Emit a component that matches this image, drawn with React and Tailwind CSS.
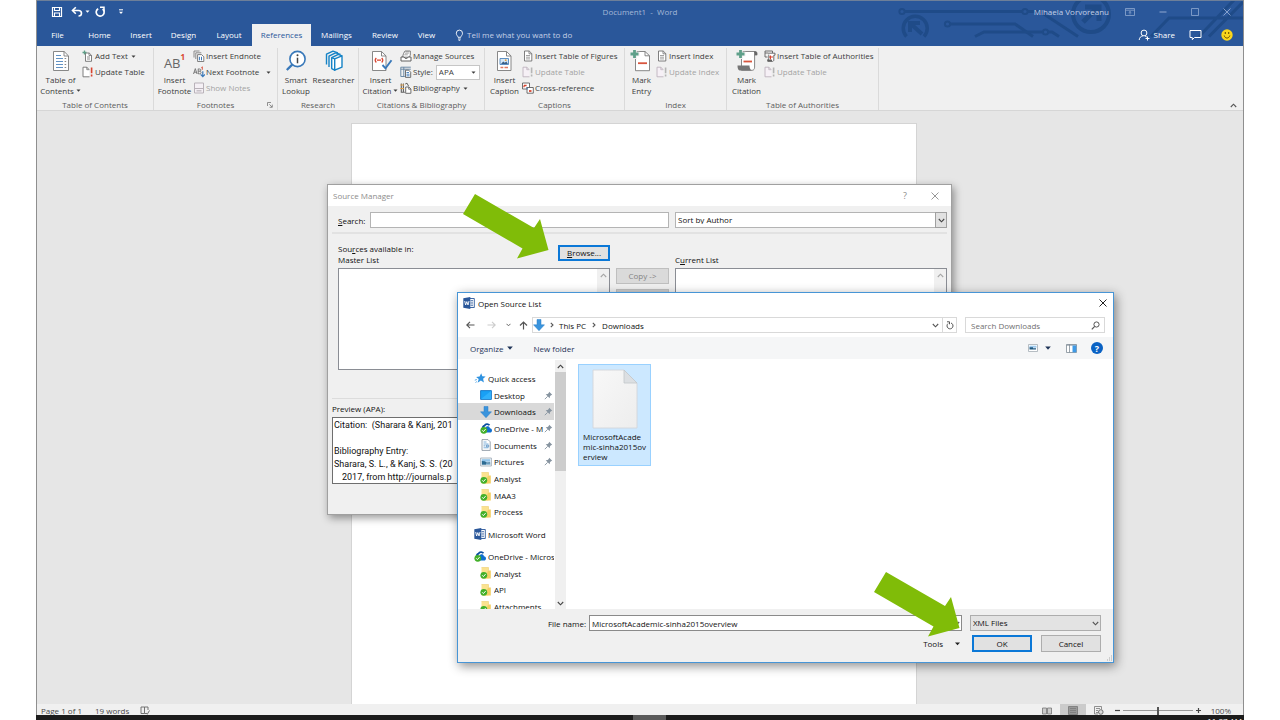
import React from "react";

const Svg = ({ w = 12, h = 12, className = "", children }) => (
  <svg width={w} height={h} viewBox={`0 0 ${w} ${h}`} fill="none" aria-hidden="true" className={`shrink-0 ${className}`}>
    {children}
  </svg>
);

const Caret = ({ className = "" }) => (
  <Svg w={5} h={3} className={className}>
    <path d="M0.5 0.5h4L2.5 2.7z" fill="currentColor" />
  </Svg>
);

const Chevron = ({ up = false, className = "" }) => (
  <Svg w={7} h={5} className={className}>
    <path d={up ? "M0.8 4L3.5 1.2L6.2 4" : "M0.8 1L3.5 3.8L6.2 1"} stroke="currentColor" strokeWidth="1.1" />
  </Svg>
);

/* ---------- ribbon icons ---------- */

const DocLines = ({ faded = false }) => (
  <Svg>
    <path d="M2.5 1h4.7l2.6 2.6V11H2.5z" fill="#fff" stroke={faded ? "#b5b5b5" : "#707070"} strokeWidth="0.9" />
    <path d="M7 1v2.8h2.8" stroke={faded ? "#b5b5b5" : "#707070"} strokeWidth="0.8" />
    <path d="M4 5.5h4M4 7.2h4M4 8.9h4" stroke={faded ? "#c4c4c4" : "#8a8a8a"} strokeWidth="0.8" />
  </Svg>
);

const UpdateIcon = ({ faded = false }) => (
  <Svg>
    <path d="M7 3.5L4.8 1.2H1v9.6h6.5" fill={faded ? "#f6f0f6" : "#fff"} stroke={faded ? "#bdb2bd" : "#707070"} strokeWidth="0.9" />
    <path d="M4.8 1.2v2.5h2.4" stroke={faded ? "#bdb2bd" : "#707070"} strokeWidth="0.8" />
    <path d="M9.6 1.5v5.7M9.6 8.6v2" stroke={faded ? "#b5b5b5" : "#d8432e"} strokeWidth="1.6" />
  </Svg>
);

const AddTextIcon = () => (
  <Svg>
    <path d="M3.5 3h3.7l2.3 2.3v6H3.5z" fill="#fff" stroke="#707070" strokeWidth="0.9" />
    <path d="M7 3v2.5h2.5M5 7h3M5 9h3" stroke="#707070" strokeWidth="0.8" />
    <path d="M2.5 0.5v4M0.5 2.5h4" stroke="#5f9e87" strokeWidth="1.3" />
  </Svg>
);

const EndnoteIcon = () => (
  <Svg>
    <path d="M1 7.5V1h5.5M2.8 9V2.8h5.5" stroke="#808080" strokeWidth="0.9" />
    <path d="M4.6 4.6h4l2.2 2.2V11.5H4.6z" fill="#fff" stroke="#707070" strokeWidth="0.9" />
    <path d="M6.4 6.8v3.5M8.5 6.8v3.5" stroke="#3b78b8" strokeWidth="1" />
  </Svg>
);

const NextFootnoteIcon = () => (
  <Svg>
    <path d="M0.5 8L2.3 2.6L4 8M1 6.2h2.6M5.2 2.8V8M5.2 3h1.5c1.6 0 1.6 2.2 0 2.2H5.2M6.6 5.3c2 0 2 2.5 0 2.5H5.2" stroke="#707070" strokeWidth="0.9" />
    <path d="M9.3 0.8v3M8.4 1.6l0.9-0.8" stroke="#d8432e" strokeWidth="0.9" />
    <path d="M9.8 5.2v5.2M7.6 8.4l2.2 2.3L12 8.4" stroke="#3b78b8" strokeWidth="1.2" />
  </Svg>
);

const NotesIcon = () => (
  <Svg>
    <path d="M1.5 1h9v10h-9z" fill="#f5f0f5" stroke="#b9b2b9" />
    <path d="M1.5 6.5h9" stroke="#b9b2b9" />
    <path d="M3.5 8.8h5" stroke="#c2bcc2" strokeWidth="1.4" />
  </Svg>
);

const ManageIcon = () => (
  <Svg>
    <path d="M3.5 3.5L5 1h5.3v4.2L8.8 7.2H2.5z" fill="#fff" stroke="#707070" strokeWidth="0.9" />
    <path d="M4.8 3.2h4M5.8 1.8h3.3M4.3 4.8h3.5" stroke="#808080" strokeWidth="0.7" />
    <path d="M1 7h3l1 1.3h2.2L8.3 7H11v4H1z" fill="#fff" stroke="#606060" strokeWidth="1" />
  </Svg>
);

const StyleIcon = () => (
  <Svg>
    <path d="M0.8 1.2h10M0.8 3.2h10M0.8 1.2v9.3h4M3.8 1.2v9.3" stroke="#5f7f9e" strokeWidth="0.9" />
    <path d="M5.5 4.2h3.2l2 2v5.2H5.5z" fill="#fff" stroke="#606060" strokeWidth="0.9" />
    <path d="M6.5 6.5h2.5M6.5 8.2h3M6.5 9.8h3" stroke="#3b78b8" strokeWidth="0.9" />
  </Svg>
);

const BiblioIcon = () => (
  <Svg>
    <path d="M1.3 1.5v8.8h3.5M3.4 1.5v8.8" stroke="#606060" strokeWidth="1.1" />
    <path d="M5.2 2l1.8-0.8 1.6 3" stroke="#606060" strokeWidth="1" />
    <path d="M0.3 3h3.8M0.3 6.5h3.8" stroke="#dda04a" strokeWidth="1.1" />
    <path d="M5.7 5h3.2l2 2v4.3H5.7z" fill="#fff" stroke="#606060" strokeWidth="0.9" />
    <path d="M8.7 5v2.2h2.2" stroke="#606060" strokeWidth="0.8" />
  </Svg>
);

const CrossRefIcon = () => (
  <Svg>
    <path d="M0.5 1h7v6h-7z" fill="#fff" stroke="#606060" strokeWidth="0.9" />
    <path d="M5 5.500h6.300v5.700H5z" fill="#fff" stroke="#606060" strokeWidth="0.9" />
    <path d="M2 3.500h2.600M2 3.500v1.800" stroke="#d8432e" strokeWidth="1.300" />
    <path d="M7 9h2.500" stroke="#d8432e" strokeWidth="1.800" />
    <path d="M4 5.500L6 7.300" stroke="#3b78b8" strokeWidth="1" />
  </Svg>
);

const AuthoritiesIcon = () => (
  <Svg>
    <path d="M1 1h7.5v2M1 1v6h2.5M1 3h3" stroke="#606060" strokeWidth="0.9" />
    <path d="M4 3.2h7v2H9.8v4.8c0 1-0.8 1.4-1.6 1.4H3.8V9.6h1V4.5" fill="#fff" stroke="#606060" strokeWidth="0.9" />
    <path d="M5 7h4M6.5 5.5v4" stroke="#d8432e" strokeWidth="1" />
    <path d="M3.5 10.4h4.5" stroke="#606060" strokeWidth="1.6" />
  </Svg>
);

const TocBig = () => (
  <Svg w={24} h={24}>
    <path d="M4.5 2.5h10.6l4.4 4.4v14.6h-15z" fill="#fff" stroke="#7a7a7a" strokeWidth="0.9" />
    <path d="M15 2.5v4.5h4.5" stroke="#7a7a7a" strokeWidth="0.9" />
    <path d="M7 6.5h5M7 9.5h7M7 12.5h7M7 15.5h7M7 18.5h7" stroke="#4f86bd" strokeWidth="0.9" />
    <path d="M15.6 9.5h1.6M15.6 12.5h1.6M15.6 15.5h1.6M15.6 18.5h1.6" stroke="#7a7a7a" strokeWidth="0.9" />
  </Svg>
);

const FootnoteBig = () => (
  <span className="flex h-6 items-center justify-center text-[#666666]">
    <span className="pt-1 text-[13px] leading-none">AB</span>
    <sup className="top-0 self-start pt-1 text-[8px] leading-none font-bold text-[#d8432e]">1</sup>
  </span>
);

const SmartBig = () => (
  <Svg w={24} h={24}>
    <circle cx="13.5" cy="10" r="7.6" fill="#fff" stroke="#3878b9" strokeWidth="1.6" />
    <path d="M8.2 15.6L2.8 21" stroke="#3878b9" strokeWidth="2.3" />
    <path d="M13.5 8.7v5.6" stroke="#444" strokeWidth="1.5" />
    <circle cx="13.5" cy="6.3" r="1" fill="#444" />
  </Svg>
);

const ResearcherBig = () => (
  <Svg w={24} h={24}>
    <g stroke="#1683c6" strokeWidth="1.4" strokeLinejoin="round">
      <path d="M4.5 15.500V5.200L11 2.200l5 1.600" />
      <path d="M7 18V7.200L13.500 3.800l5 1.600" fill="#f0f0f0" />
      <path d="M9.700 8.600l3 1.200v11.400l-3-1.600z" fill="#fff" />
      <path d="M12.700 9.800l7.300-3v11.300l-7.300 3.100z" fill="#fff" />
      <path d="M9.700 8.600l6.600-3.200 3.700 1.400" />
    </g>
  </Svg>
);

const CitationBig = () => (
  <Svg w={24} h={24}>
    <path d="M3.5 2.5h9l4.5 4.4v14.6H3.5z" fill="#fff" stroke="#7a7a7a" strokeWidth="0.9" />
    <path d="M12.5 2.5v4.5H17" stroke="#7a7a7a" strokeWidth="0.9" />
    <path d="M7.300 9c-1.300 1.300-1.300 3.200 0 4.500M12.700 9c1.300 1.300 1.300 3.200 0 4.500M8 11.200h4" stroke="#d8432e" strokeWidth="1.200" />
    <path d="M13.5 16l3 3.3 6-8" stroke="#3878b9" strokeWidth="1.9" />
  </Svg>
);

const CaptionBig = () => (
  <Svg w={24} h={24}>
    <path d="M4.5 2.5h9l4.5 4.4v14.6H4.500z" fill="#fff" stroke="#7a7a7a" strokeWidth="0.9" />
    <path d="M13.500 2.500v4.500H18" stroke="#7a7a7a" strokeWidth="0.9" />
    <path d="M7 9.500h8.500v6H7z" fill="#d6e7f6" stroke="#4f86bd" strokeWidth="0.9" />
    <path d="M8 15l2.200-2.600 1.600 1.400 1.500-1.300 1.700 2.500z" fill="#3a5f86" />
    <circle cx="12.700" cy="11.200" r="0.9" fill="#e6a23c" />
    <path d="M7.500 18.500h2.800M11.500 18.500h3.500" stroke="#e0775f" strokeWidth="1.3" />
  </Svg>
);

const MarkEntryBig = () => (
  <Svg w={24} h={24}>
    <path d="M5.5 4.500V2.500h9.500l4.500 4.200v15h-14z" fill="#fff" stroke="#7a7a7a" strokeWidth="0.9" />
    <path d="M15 2.500v4.300h4.500" stroke="#7a7a7a" strokeWidth="0.9" />
    <path d="M8 14.200h9" stroke="#d8553e" strokeWidth="1.800" />
    <path d="M4.500 0v10M0 5h9.500" stroke="#f0f0f0" strokeWidth="4.400" />
    <path d="M4.500 1v8M0.500 5h8" stroke="#5fa08a" strokeWidth="2.800" />
  </Svg>
);

const MarkCitationBig = () => (
  <Svg w={24} h={24}>
    <path d="M6.5 2.500h14c1 0 1.500 0.800 1.500 3.200h-2.400v12.400c0 1.800-0.800 3.200-2.400 3.200H6.500z" fill="#fff" stroke="#7a7a7a" strokeWidth="0.9" />
    <path d="M19 2.500h1.700c1 0 1.500 1 1.500 3.800h-2.800z" fill="#666" />
    <path d="M2.500 16.500h12c0 2 0.600 3.900 2 4.900H4.700C3.200 21.400 2.500 19.200 2.500 16.500z" fill="#757575" />
    <path d="M8.5 12.500h8.500" stroke="#d8553e" strokeWidth="1.800" />
    <path d="M5.500 0v10M1 5h9.500" stroke="#f0f0f0" strokeWidth="4.400" />
    <path d="M5.500 1v8M1.500 5h8" stroke="#5fa08a" strokeWidth="2.800" />
  </Svg>
);

/* ---------- ribbon parts ---------- */

const Group = ({ width, label, launcher, children }) => (
  <section className={`${width} flex shrink-0 flex-col border-r border-[#dadada]`}>
    <div className="flex h-[50px] shrink-0 items-start pl-0.5">{children}</div>
    <div className="relative pt-px text-center text-[8px] leading-[11px] text-[#5c5c5c]">
      {label}
      {launcher && (
        <button aria-label={`${label} settings`} className="absolute right-1 top-1">
          <Svg w={6} h={6}>
            <path d="M0.5 4V0.5H4M2.3 2.3L5 5M5.3 2.6v2.7H2.6" stroke="#777" strokeWidth="0.8" />
          </Svg>
        </button>
      )}
    </div>
  </section>
);

const Big = ({ width, icon, top, bottom, caret }) => (
  <button className={`${width} flex shrink-0 flex-col items-center text-[8px] leading-[11px] whitespace-nowrap text-[#3c3c3c]`}>
    <span className="flex h-[26px] items-center">{icon}</span>
    <span>{top}</span>
    <span className="flex items-center gap-0.5">
      {bottom}
      {caret && <Caret />}
    </span>
  </button>
);

const Small = ({ icon, label, caret, off }) => (
  <button disabled={off} className={`flex h-4 items-center gap-px text-[8px] whitespace-nowrap ${off ? "text-[#a3a3a3]" : "text-[#3c3c3c]"}`}>
    {icon}
    <span>{label}</span>
    {caret && <Caret className={caret} />}
  </button>
);

const Stack = ({ children }) => <div className="flex flex-1 flex-col">{children}</div>;

const tabs = [
  ["File", "w-[41px]"],
  ["Home", "w-[43px]"],
  ["Insert", "w-[40px]"],
  ["Design", "w-[45px]"],
  ["Layout", "w-[46px]"],
  ["References", "w-[59px]"],
  ["Mailings", "w-[51px]"],
  ["Review", "w-[46px]"],
  ["View", "w-[37px]"],
];

const Circuit = () => (
  <svg width="363" height="38" viewBox="0 0 363 38" fill="none" aria-hidden="true" className="pointer-events-none absolute top-0 right-0">
    <g stroke="#1f4b88" strokeWidth="3">
      <circle cx="22" cy="11.5" r="2.6" strokeWidth="2" />
      <path d="M25 11.5h117" />
      <circle cx="145" cy="11.5" r="2.6" strokeWidth="2" />
      <path d="M148 11.5h12l38 25" />
      <circle cx="67.500" cy="24" r="2.600" strokeWidth="2" />
      <path d="M70 24h65l18 12.500" />
      <path d="M95 36.500l9-4.500h58" />
      <circle cx="165.500" cy="32" r="2.600" strokeWidth="2" />
      <path d="M168 32h4l7 4.500" />
      <path d="M26.500 36.500a12 12 0 1 1 17.500 0" strokeWidth="3.500" />
      <path d="M42 34L31 24M30 32v-9h10" strokeWidth="4" />
      <circle cx="211" cy="14" r="18" strokeWidth="4" />
      <path d="M203 22l15-15M205 7h14v14" strokeWidth="5" />
      <path d="M271 36.500L289 18h74M319 36.500L354 0M329 36.500L363 2" />
    </g>
  </svg>
);

const TitleBar = () => (
  <header className="relative bg-[#2a579a] text-white">
    <Circuit />
    <div className="relative flex h-6 items-center justify-between border-t border-[#6d7f99] pr-3 pb-0.5 pl-3.5 text-[8px]">
      <div className="flex items-center gap-2">
        <button aria-label="Save">
          <Svg w={12}>
            <path d="M1.500 1.500h9v9h-9z" stroke="#fff" strokeWidth="1.200" />
            <path d="M3.500 1.500v3h5v-3M3.500 10.500V7h5v3.500" stroke="#fff" strokeWidth="1.100" />
          </Svg>
        </button>
        <button aria-label="Undo" className="flex items-center gap-0.5">
          <Svg w={12}>
            <path d="M2 4.500h5.500c4 0 4 5.500 0 5.500" stroke="#fff" strokeWidth="1.600" />
            <path d="M4.800 1.200L1.500 4.500l3.300 3.300" stroke="#fff" strokeWidth="1.600" />
          </Svg>
          <Caret />
        </button>
        <button aria-label="Repeat" className="-ml-1">
          <Svg w={12}>
            <path d="M4.200 2.700A4 4 0 1 0 8.600 3" stroke="#fff" strokeWidth="1.700" />
            <path d="M6 1.200h4v4" stroke="#fff" strokeWidth="1.500" />
          </Svg>
        </button>
        <button aria-label="Customize Quick Access Toolbar" className="ml-1">
          <Svg w={6} h={6}>
            <path d="M1 0.800h4" stroke="#fff" />
            <path d="M1 2.800h4L3 5z" fill="#fff" />
          </Svg>
        </button>
      </div>
      <h1 className="absolute left-1/2 -translate-x-1/2 whitespace-pre text-[#a4b8d8]">Document1  -  Word</h1>
      <div className="flex items-center text-[#c3d0e6]">
        <span className="mr-4">Mihaela Vorvoreanu</span>
        <button aria-label="Ribbon display options" className="mr-6">
          <Svg w={10} h={8}>
            <path d="M0.500 0.500h9v7h-9zM0.500 2.200h9M5 6.500V3.500M3.700 4.700L5 3.500l1.300 1.200" stroke="#8fa8d0" strokeWidth="0.800" />
          </Svg>
        </button>
        <button aria-label="Minimize" className="mr-6">
          <Svg w={8} h={8}>
            <path d="M0.500 4h7" stroke="#8fa8d0" />
          </Svg>
        </button>
        <button aria-label="Maximize" className="mr-6">
          <Svg w={8} h={8}>
            <path d="M0.500 0.500h7v7h-7z" stroke="#8fa8d0" strokeWidth="0.800" />
          </Svg>
        </button>
        <button aria-label="Close">
          <Svg w={8} h={8}>
            <path d="M0.500 0.500l7 7M7.500 0.500l-7 7" stroke="#8fa8d0" strokeWidth="0.900" />
          </Svg>
        </button>
      </div>
    </div>
    <div className="relative flex h-[22px] text-[8px]">
      <nav className="flex">
        {tabs.map(([name, width]) => (
          <button key={name} className={`${width} text-center ${name === "References" ? "bg-[#f0f0f0] text-[#2a579a]" : "text-white"}`}>
            {name}
          </button>
        ))}
      </nav>
      <button className="ml-2.5 flex items-center gap-[3px] text-[#c3d0e6]">
        <Svg w={9} h={12}>
          <path d="M3 8.300C3 7 1.300 6.300 1.300 4.200a3.100 3.100 0 0 1 6.200 0C7.500 6.300 5.800 7 5.800 8.300zM3 10h2.800M3.600 11.300h1.600" stroke="#fff" strokeWidth="0.900" />
        </Svg>
        Tell me what you want to do
      </button>
      <div className="ml-auto flex items-center pr-2.5">
        <button className="mr-3.5 flex items-center gap-1">
          <Svg w={12}>
            <circle cx="6" cy="4" r="2.900" stroke="#fff" />
            <path d="M1.200 11c0.200-2.400 1.600-3.800 3.600-4M7 7c0.700 0.200 1.300 0.600 1.800 1.100M9.500 7.500v4M7.500 9.500h4" stroke="#fff" />
          </Svg>
          Share
        </button>
        <button aria-label="Comments" className="mr-[19px]">
          <Svg w={13}>
            <path d="M1 1.500h11v7H5.500L3.300 10.700V8.500H1z" stroke="#fff" />
          </Svg>
        </button>
        <button aria-label="Feedback">
          <Svg>
            <circle cx="6" cy="6" r="5.700" fill="#fbd61c" />
            <path d="M3.200 6.500c0.800 3.400 4.800 3.400 5.600 0" stroke="#6b5200" />
            <path d="M4.300 3v2M7.700 3v2" stroke="#6b5200" strokeWidth="1.100" />
          </Svg>
        </button>
      </div>
    </div>
  </header>
);

const Ribbon = () => (
  <div className="relative flex h-[65px] border-b border-[#d6d6d6] bg-[#f0f0f0] pt-0.5">
    <Group width="w-[117px]" label="Table of Contents">
      <Big width="w-[43px]" icon={<TocBig />} top="Table of" bottom="Contents" caret />
      <Stack>
        <Small icon={<AddTextIcon />} label="Add Text" caret="ml-0.5" />
        <Small icon={<UpdateIcon />} label="Update Table" />
      </Stack>
    </Group>
    <Group width="w-[124px]" label="Footnotes" launcher>
      <Big width="w-[37px]" icon={<FootnoteBig />} top="Insert" bottom="Footnote" />
      <Stack>
        <Small icon={<EndnoteIcon />} label="Insert Endnote" />
        <Small icon={<NextFootnoteIcon />} label="Next Footnote" caret="ml-1.5" />
        <Small icon={<NotesIcon />} label="Show Notes" off />
      </Stack>
    </Group>
    <Group width="w-[81px]" label="Research">
      <Big width="w-[32px]" icon={<SmartBig />} top="Smart" bottom="Lookup" />
      <Big width="w-[43px]" icon={<ResearcherBig />} top="Researcher" />
    </Group>
    <Group width="w-[126px]" label="Citations & Bibliography">
      <Big width="w-[39px]" icon={<CitationBig />} top="Insert" bottom="Citation" caret />
      <Stack>
        <Small icon={<ManageIcon />} label="Manage Sources" />
        <div className="flex h-4 items-center gap-px text-[8px] text-[#3c3c3c]">
          <StyleIcon />
          <label htmlFor="style">Style:</label>
          <span className="relative ml-0.5 flex items-center">
            <select id="style" className="h-[15px] w-[44px] appearance-none border border-[#c6c6c6] bg-white pl-0.5 text-[8px]">
              <option>APA</option>
            </select>
            <Caret className="pointer-events-none absolute right-1" />
          </span>
        </div>
        <Small icon={<BiblioIcon />} label="Bibliography" caret="ml-0.5" />
      </Stack>
    </Group>
    <Group width="w-[140px]" label="Captions">
      <Big width="w-[35px]" icon={<CaptionBig />} top="Insert" bottom="Caption" />
      <Stack>
        <Small icon={<DocLines />} label="Insert Table of Figures" />
        <Small icon={<UpdateIcon faded />} label="Update Table" off />
        <Small icon={<CrossRefIcon />} label="Cross-reference" />
      </Stack>
    </Group>
    <Group width="w-[102px]" label="Index">
      <Big width="w-[29px]" icon={<MarkEntryBig />} top="Mark" bottom="Entry" />
      <Stack>
        <Small icon={<DocLines />} label="Insert Index" />
        <Small icon={<UpdateIcon faded />} label="Update Index" off />
      </Stack>
    </Group>
    <Group width="w-[152px]" label="Table of Authorities">
      <Big width="w-[35px]" icon={<MarkCitationBig />} top="Mark" bottom="Citation" />
      <Stack>
        <Small icon={<AuthoritiesIcon />} label="Insert Table of Authorities" />
        <Small icon={<UpdateIcon faded />} label="Update Table" off />
      </Stack>
    </Group>
    <button aria-label="Collapse the ribbon" className="mr-1.5 mb-0.5 ml-auto self-end text-[#555]">
      <Chevron up />
    </button>
  </div>
);

/* ---------- Source Manager ---------- */

const ListBox = ({ className = "" }) => (
  <div className={`${className} flex h-[102px] justify-end border border-[#8a8d94] bg-white`}>
    <div className="flex w-3 justify-center bg-[#f0f0f0] pt-1 text-[#a5a5a5]">
      <Chevron up />
    </div>
  </div>
);

const SourceManager = () => (
  <section role="dialog" aria-label="Source Manager" className="absolute top-[184px] left-[327px] flex h-[331px] w-[625px] flex-col border border-[#a0a0a0] bg-[#f0f0f0] text-[8px] leading-[11px] text-[#111] shadow-[2px_3px_8px_rgba(0,0,0,0.4)]">
    <div className="flex h-[21px] items-center bg-white pr-3 pl-[5px] text-[#8c8c8c]">
      <h2 className="mr-auto">Source Manager</h2>
      <button aria-label="Help" className="mr-6 text-[9px]">?</button>
      <button aria-label="Close">
        <Svg w={8} h={8}>
          <path d="M0.500 0.500l7 7M7.500 0.500l-7 7" stroke="#8c8c8c" strokeWidth="0.900" />
        </Svg>
      </button>
    </div>
    <div className="mx-1 flex h-[28px] items-center border-b-2 border-[#e2e2e2] pt-0.5 pl-1.5">
      <label htmlFor="search" className="w-8"><u>S</u>earch:</label>
      <input id="search" className="h-4 min-w-0 flex-1 border border-[#b4b4b4] bg-white" />
      <div className="relative ml-1.5 flex">
        <select aria-label="Sort order" className="h-4 w-[272px] appearance-none border border-[#b4b4b4] bg-white pl-0.5 leading-none">
          <option>Sort by Author</option>
        </select>
        <span className="pointer-events-none absolute inset-y-0 right-0 flex w-3 items-center justify-center border border-[#a0a0a0] bg-[#e1e1e1] text-[#444]">
          <Chevron />
        </span>
      </div>
    </div>
    <div className="mr-1 ml-2.5 flex h-[34px] items-end pb-[3px]">
      <div className="flex-1">
        <p>Sou<u>r</u>ces available in:</p>
        <p>Master List</p>
      </div>
      <button className="mr-[65px] mb-1 h-4 w-[52px] border-2 border-[#0b78d7] bg-[#e1e1e1] leading-none"><u>B</u>rowse...</button>
      <p className="w-[272px]">C<u>u</u>rrent List</p>
    </div>
    <div className="mr-1 ml-2.5 flex gap-1.5">
      <ListBox className="flex-1" />
      <div className="flex w-[53px] flex-col gap-[5px]">
        <button disabled className="h-4 border border-[#bfbfbf] bg-[#dadada] leading-none text-[#838383]">Copy -&gt;</button>
        <button disabled aria-label="Delete" className="h-4 border border-[#bfbfbf] bg-[#cccccc]" />
      </div>
      <ListBox className="w-[272px]" />
    </div>
    <div className="mx-1 mt-7 border-t border-[#dcdcdc] pt-1">
      <h3>Preview (APA):</h3>
      <div className="mt-[3px] h-[67px] overflow-hidden border border-[#6e6e6e] bg-white pt-px pl-px font-['Roboto',sans-serif] text-[9px] leading-[13px]">
        <p className="whitespace-pre">Citation:  (Sharara &amp; Kanj, 201</p>
        <p className="mt-[13px]">Bibliography Entry:</p>
        <p>Sharara, S. L., &amp; Kanj, S. S. (20</p>
        <p className="pl-2">2017, from http://journals.p</p>
      </div>
    </div>
  </section>
);

/* ---------- Open Source List ---------- */

const WordIcon = () => (
  <Svg>
    <path d="M6 1.500h5.300v9H6z" fill="#fff" stroke="#2a579a" strokeWidth="0.900" />
    <path d="M7.500 3.500h2.500M7.500 5.200h2.500M7.500 6.900h2.500M7.500 8.600h2.500" stroke="#2a579a" strokeWidth="0.700" />
    <path d="M0.300 1.300L7.300 0v12L0.300 10.700z" fill="#2a579a" />
    <path d="M1.700 4l0.900 4L3.800 4.600L5 8L6 4" stroke="#fff" strokeWidth="0.900" />
  </Svg>
);

const DownIcon = () => (
  <Svg>
    <path d="M4 0.500h4v5.300h3.500L6 11.700L0.500 5.800H4z" fill="#3a94dd" stroke="#2a7fc6" strokeWidth="0.500" />
  </Svg>
);

const StarIcon = () => (
  <Svg>
    <path d="M7.200 1.200l1.100 3 3.300 0.300-2.500 2.300 0.800 3.800-3-2-3.300 2.100 1.100-3.700L2.100 4.900l3.500-0.400z" fill="#2f92e0" />
    <path d="M0.800 8.200l2-0.700M1.500 10.500l1.300-0.900" stroke="#2f92e0" strokeWidth="0.800" />
  </Svg>
);

const DesktopIcon = () => (
  <Svg>
    <path d="M0.600 1.600h10.800v8.800H0.600z" fill="#18a0f5" stroke="#1173c4" strokeWidth="0.900" />
    <path d="M1 10L11 2v8z" fill="#2fb0fb" />
  </Svg>
);

const Check = () => (
  <>
    <circle cx="3.800" cy="8.300" r="3.400" fill="#43b02a" />
    <path d="M2.200 8.300l1.200 1.300 2.200-2.500" stroke="#fff" strokeWidth="1" />
  </>
);

const CloudIcon = () => (
  <Svg>
    <path d="M3 7a2.700 2.700 0 0 1 1.500-3.300A3 3 0 0 1 9.500 3.300" stroke="#0a4fa0" strokeWidth="1.800" />
    <path d="M3.500 10.500V8c0-1.400 1-2 2-2 0.500-2.300 4-2.200 4.400 0.300 1.500 0.200 2.100 1.200 2.100 2.100s-0.700 2.100-2 2.100z" fill="#0f6fd0" />
    <Check />
  </Svg>
);

const FolderIcon = () => (
  <Svg>
    <path d="M1.500 0.500h7v11h-7z" fill="#fbe28f" />
    <path d="M8 3.500h2.800v8H5z" fill="#f3cf63" />
    <path d="M1.500 0.500h7v3" stroke="#efcf6e" strokeWidth="0.600" />
    <Check />
  </Svg>
);

const DocumentsIcon = () => (
  <Svg>
    <path d="M2 0.600h6l2.200 2.200v8.600H2z" fill="#fff" stroke="#8f9aa5" strokeWidth="0.900" />
    <path d="M3.500 3h3M3.500 5h5M3.500 8.800h5" stroke="#6fa7d6" strokeWidth="0.900" />
    <path d="M6.500 6.200h2.200v1.600H6.500zM3.500 6.900h2" stroke="#4a86bd" strokeWidth="0.800" />
  </Svg>
);

const PicturesIcon = () => (
  <Svg>
    <path d="M0.600 2h10.800v8H0.600z" fill="#f4f8fb" stroke="#9aa7b3" strokeWidth="0.800" />
    <path d="M1.800 3.200h8.400v2.500H1.800z" fill="#8fc3ea" />
    <path d="M1.800 5l3 0.300 2 1.200 3.400-0.300v2.600H1.800z" fill="#2c6b93" />
    <path d="M6 7.500h4.200v1.300H6z" fill="#a9cfe6" />
  </Svg>
);

const Pin = () => (
  <Svg w={9} h={9}>
    <path d="M5.200 0.800L8.200 3.800L7 4.300L6 5.300L5.700 7.300L1.700 3.300L3.700 3L4.700 2z" fill="#8794a0" />
    <path d="M3.700 5.300L0.800 8.200" stroke="#8794a0" strokeWidth="0.900" />
  </Svg>
);

const Row = ({ icon, label, pinned, level = 1, selected }) => (
  <li className={`flex min-h-0 flex-1 items-center gap-0.5 ${level ? "pl-[22px]" : "pl-4"} ${selected ? "bg-[#d9d9d9]" : ""}`}>
    {icon}
    <span className="min-w-0 flex-1 overflow-hidden whitespace-nowrap">{label}</span>
    {pinned && <span className="-ml-0.5 pr-px"><Pin /></span>}
  </li>
);

const Sidebar = () => (
  <div className="flex w-[108px] shrink-0">
    <div className="flex w-24 flex-col overflow-hidden pt-2.5 text-[#111]">
      <ul className="flex h-[150px] shrink-0 flex-col">
        <Row level={0} icon={<StarIcon />} label="Quick access" />
        <Row icon={<DesktopIcon />} label="Desktop" pinned />
        <Row icon={<DownIcon />} label="Downloads" pinned selected />
        <Row icon={<CloudIcon />} label="OneDrive - M" pinned />
        <Row icon={<DocumentsIcon />} label="Documents" pinned />
        <Row icon={<PicturesIcon />} label="Pictures" pinned />
        <Row icon={<FolderIcon />} label="Analyst" />
        <Row icon={<FolderIcon />} label="MAA3" />
        <Row icon={<FolderIcon />} label="Process" />
      </ul>
      <ul className="mt-1.5 flex h-4 shrink-0 flex-col">
        <Row level={0} icon={<WordIcon />} label="Microsoft Word" />
      </ul>
      <ul className="mt-1.5 flex h-[67px] shrink-0 flex-col">
        <Row level={0} icon={<CloudIcon />} label="OneDrive - Microsoft" />
        <Row icon={<FolderIcon />} label="Analyst" />
        <Row icon={<FolderIcon />} label="API" />
        <Row icon={<FolderIcon />} label="Attachments" />
      </ul>
    </div>
    <div className="ml-px flex w-[11px] flex-col items-center bg-[#f0f0f0] text-[#444]">
      <span className="flex h-3 items-center"><Chevron up /></span>
      <span className="h-[99px] w-full bg-[#cdcdcd]" />
      <span className="mt-auto flex h-3 items-center"><Chevron /></span>
    </div>
  </div>
);

const FilePage = () => (
  <svg width="46" height="60" viewBox="0 0 46 60" aria-hidden="true" className="mx-auto">
    <defs>
      <linearGradient id="sheet" x1="0" y1="0" x2="1" y2="1">
        <stop offset="0" stopColor="#f8f8f8" />
        <stop offset="1" stopColor="#ededed" />
      </linearGradient>
    </defs>
    <path d="M1 1h31l13 13v45H1z" fill="url(#sheet)" stroke="#d2d6da" strokeWidth="0.900" />
    <path d="M32 1v13h13z" fill="#dcdfe2" stroke="#c2c6ca" strokeWidth="0.800" />
  </svg>
);

const OpenDialog = () => (
  <section role="dialog" aria-label="Open Source List" className="absolute top-[292px] left-[457px] flex h-[371px] w-[657px] flex-col border border-[#4795d6] bg-white text-[8px] leading-[11px] text-[#111] shadow-[2px_3px_10px_rgba(0,0,0,0.45)]">
    <div className="flex h-5 items-center gap-0.5 pr-1.5 pl-[5px]">
      <WordIcon />
      <h2 className="mr-auto ml-px">Open Source List</h2>
      <button aria-label="Close">
        <Svg w={8} h={8}>
          <path d="M0.500 0.500l7 7M7.500 0.500l-7 7" stroke="#222" strokeWidth="1" />
        </Svg>
      </button>
    </div>
    <div className="flex h-6 items-center px-2">
      <button aria-label="Back" className="mr-3">
        <Svg w={9} h={8}><path d="M8.500 4H1M4 0.800L0.800 4L4 7.200" stroke="#555" strokeWidth="1.100" /></Svg>
      </button>
      <button aria-label="Forward" className="mr-2.5">
        <Svg w={9} h={8}><path d="M0.500 4H8M5 0.800L8.200 4L5 7.200" stroke="#ccc" strokeWidth="1.100" /></Svg>
      </button>
      <button aria-label="Recent locations" className="mr-2">
        <Svg w={5} h={4}><path d="M0.500 0.800l2 2 2-2" stroke="#666" /></Svg>
      </button>
      <button aria-label="Up" className="mr-1">
        <Svg w={9} h={9}><path d="M4.500 8.500V1M1 4.500L4.500 1L8 4.500" stroke="#555" strokeWidth="1.200" /></Svg>
      </button>
      <div className="flex h-4 flex-1 items-center border border-[#d9d9d9]">
        <DownIcon />
        <Svg w={4} h={6} className="mx-[5px]"><path d="M0.800 0.800L3 3L0.800 5.200" stroke="#555" strokeWidth="1.100" /></Svg>
        <span>This PC</span>
        <Svg w={4} h={6} className="mx-1.5"><path d="M0.800 0.800L3 3L0.800 5.200" stroke="#555" strokeWidth="1.100" /></Svg>
        <span>Downloads</span>
        <button aria-label="Previous locations" className="mr-[3px] ml-auto text-[#555]"><Chevron /></button>
        <button aria-label="Refresh" className="flex h-full w-3.5 items-center justify-center border-l border-[#d9d9d9]">
          <Svg w={8} h={9}>
            <path d="M5 2A3 3 0 1 1 2 2.600" stroke="#555" />
            <path d="M1 0.800h2.500v2.500" stroke="#555" />
          </Svg>
        </button>
      </div>
      <div className="ml-2 flex h-4 w-[140px] items-center border border-[#d9d9d9] pr-1 pl-[5px]">
        <input aria-label="Search Downloads" placeholder="Search Downloads" className="min-w-0 flex-1 bg-transparent placeholder:text-[#6f6f6f]" />
        <Svg w={9} h={9}>
          <circle cx="5.500" cy="3.500" r="2.600" stroke="#555" />
          <path d="M3.700 5.400L0.800 8.300" stroke="#555" strokeWidth="1.200" />
        </Svg>
      </div>
    </div>
    <div className="flex h-[22px] items-center bg-[#f5f6f7] pr-2.5 pl-3 text-[#1e3357]">
      <button className="mr-5 flex items-center gap-1">
        Organize
        <Svg w={6} h={4}><path d="M0.200 0.500h5.600L3 3.700z" fill="#1e3357" /></Svg>
      </button>
      <button className="mr-auto">New folder</button>
      <button aria-label="Change your view" className="mr-[15px] flex items-center gap-[7px]">
        <Svg w={10} h={8}>
          <path d="M0.500 0.500h9v7h-9z" fill="#fff" stroke="#a5adb5" strokeWidth="0.800" />
          <path d="M1.500 1.700h7v2h-7z" fill="#9fcbef" />
          <path d="M1.500 3.300h3.500v1H8v1.200H1.500z" fill="#1f5a82" />
        </Svg>
        <Svg w={6} h={4}><path d="M0.200 0.500h5.600L3 3.700z" fill="#1e3357" /></Svg>
      </button>
      <button aria-label="Show the preview pane" className="mr-3.5">
        <Svg w={11} h={9}>
          <path d="M0.500 0.500h10v8h-10z" fill="#fff" stroke="#7f8b96" strokeWidth="0.800" />
          <path d="M3.500 0.500v8M0.500 1.200h10" stroke="#7f8b96" strokeWidth="0.800" />
          <path d="M6.500 1.500h3.800v6.800H6.500z" fill="#3f9ae6" />
        </Svg>
      </button>
      <button aria-label="Help" className="flex size-3 items-center justify-center rounded-full bg-[#0a62c4] text-[9px] leading-none font-bold text-white">?</button>
    </div>
    <div className="flex min-h-0 flex-1 pt-px">
      <Sidebar />
      <div className="flex-1 pt-1 pl-3">
        <button className="flex h-[102px] w-[73px] flex-col border border-[#99d1ff] bg-[#cce8ff] pt-1 text-left">
          <FilePage />
          <span className="mt-[3px] block pl-1 leading-[10px]">
            MicrosoftAcade
            <br />
            mic-sinha2015ov
            <br />
            erview
          </span>
        </button>
      </div>
    </div>
    <div className="flex h-[53px] flex-col gap-1 bg-[#f0f0f0] pt-1.5 pr-3">
      <div className="flex items-center">
        <label htmlFor="file-name" className="w-[131px] pr-[3px] text-right">File name:</label>
        <div className="relative flex flex-1 items-center">
          <input id="file-name" defaultValue="MicrosoftAcademic-sinha2015overview" className="h-4 w-full border border-[#8a8a8a] bg-white pl-0.5" />
          <Chevron className="pointer-events-none absolute right-0.5 text-[#555]" />
        </div>
        <div className="relative ml-2 flex items-center">
          <select aria-label="File type" className="h-4 w-[131px] appearance-none border border-[#adadad] bg-[#e3e3e3] pl-0.5 leading-none">
            <option>XML Files</option>
          </select>
          <Chevron className="pointer-events-none absolute right-0.5 text-[#555]" />
        </div>
      </div>
      <div className="flex items-center justify-end">
        <button className="mr-3 flex items-center gap-3">
          Tools
          <Svg w={5} h={4}><path d="M0 0.500h5L2.500 3.300z" fill="#222" /></Svg>
        </button>
        <button className="mr-[9px] h-[17px] w-[60px] border-2 border-[#0b78d7] bg-[#e1e1e1] leading-none">OK</button>
        <button className="h-[17px] w-[60px] border border-[#adadad] bg-[#e1e1e1] leading-none">Cancel</button>
      </div>
    </div>
    <Svg w={7} h={7} className="absolute right-0 bottom-0">
      <path d="M5 1h1M3 3h1M5 3h1M1 5h1M3 5h1M5 5h1" stroke="#aaa" />
    </Svg>
  </section>
);

const Arrow = ({ className }) => (
  <svg width="86" height="65" viewBox="0 0 86 65" aria-hidden="true" className={`pointer-events-none absolute ${className}`}>
    <path d="M12 0L0 20L59.500 54.500L54 64.500L85.500 56L77 25L71 34z" fill="#80bc08" />
  </svg>
);

const StatusBar = () => (
  <footer className="flex h-[11px] shrink-0 items-center bg-[#f0f0f0] px-1 pt-0.5 text-[8px] leading-[9px] text-[#4a4a4a]">
    <span className="mr-[13px]">Page 1 of 1</span>
    <span className="mr-[11px]">19 words</span>
    <Svg w={10} h={9}>
      <path d="M1 1h3.500v6.500H1zM4.500 1H8v3M4.500 7.500H6M6 7l1.300 1.200L9.500 4.500" stroke="#666" strokeWidth="0.900" />
    </Svg>
    <button aria-label="Read mode" className="mr-2 ml-auto">
      <Svg w={10} h={8}>
        <path d="M0.500 1h4v6h-4zM5.500 1h4v6h-4z" fill="#ccc" stroke="#777" strokeWidth="0.800" />
      </Svg>
    </button>
    <button aria-label="Print layout" className="-mt-0.5 mr-2 flex h-[11px] w-[26px] items-end justify-center bg-[#cbcbcb]">
      <Svg w={10} h={9}>
        <path d="M0.500 0.500h9v8h-9z" fill="#999" stroke="#777" strokeWidth="0.800" />
        <path d="M2 2.500h6M2 4.500h6M2 6.500h6" stroke="#777" strokeWidth="0.700" />
      </Svg>
    </button>
    <button aria-label="Web layout" className="mr-[11px]">
      <Svg w={10} h={9}>
        <path d="M0.500 0.500h7v3M0.500 0.500v7.500h3.500M2 2.500h4M2 4.500h2M2 6.500h2" stroke="#777" strokeWidth="0.800" />
        <circle cx="6.800" cy="6" r="2.300" fill="#ddd" stroke="#666" strokeWidth="0.900" />
      </Svg>
    </button>
    <button aria-label="Zoom out"><Svg w={5} h={5}><path d="M0 2.500h5" stroke="#444" strokeWidth="1.200" /></Svg></button>
    <span className="mx-[3px] flex h-full w-[70px] items-center justify-center bg-[linear-gradient(#9a9a9a,#9a9a9a)] bg-[length:100%_1px] bg-center bg-no-repeat">
      <span className="h-2 w-0.5 bg-[#555]" />
    </span>
    <button aria-label="Zoom in"><Svg w={5} h={5}><path d="M0 2.500h5M2.500 0v5" stroke="#444" strokeWidth="1.200" /></Svg></button>
    <span className="mr-2 ml-2.5">100%</span>
  </footer>
);

export default function App() {
  return (
    <main className="relative flex h-screen min-h-[720px] flex-col overflow-hidden bg-white px-9 font-['Open_Sans','Noto_Sans',sans-serif]">
      <div className="flex min-h-0 flex-1 flex-col border-x border-[#8f8f8f]">
        <TitleBar />
        <Ribbon />
        <div className="flex min-h-0 flex-1 justify-center bg-[#e6e6e6] pt-3 pr-[13px]">
          <article className="w-[566px] border border-b-0 border-[#d4d4d4] bg-white" />
        </div>
        <StatusBar />
      </div>
      <div className="flex h-[5px] shrink-0 justify-end overflow-hidden bg-[#1c1c1c] pr-0.5 text-[8px] leading-[11px] text-white">
        <span className="mr-auto ml-[597px] w-[33px] bg-[#5a5a5a]" />
        <span>11:07 AM</span>
      </div>
      <SourceManager />
      <OpenDialog />
      <Arrow className="top-[194px] left-[463px]" />
      <Arrow className="top-[572px] left-[874px]" />
    </main>
  );
}
